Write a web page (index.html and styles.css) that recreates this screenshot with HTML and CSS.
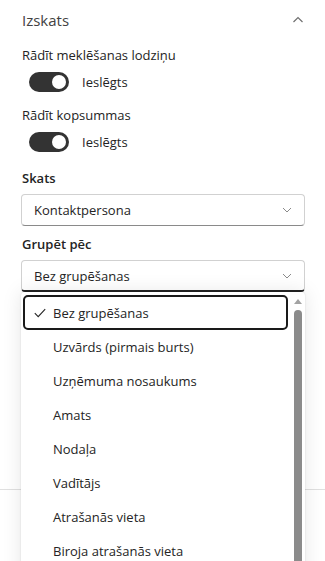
FILE: index.html
```html
<!DOCTYPE html>
<html lang="lv">
<head>
<meta charset="utf-8">
<title>Izskats</title>
<link rel="stylesheet" href="styles.css">
</head>
<body>
<div class="panel">
  <div class="section-head">
    <span class="section-title">Izskats</span>
    <svg class="chev-up" width="12" height="8" viewBox="0 0 12 8"><polyline points="1.5,6 6,1.5 10.5,6" fill="none" stroke="#707070" stroke-width="1.2"/></svg>
  </div>
  <div class="setting">
    <div class="label">Rādīt meklēšanas lodziņu</div>
    <div class="switch-row"><span class="switch"><span class="knob"></span></span><span class="switch-text">Ieslēgts</span></div>
  </div>
  <div class="setting second">
    <div class="label">Rādīt kopsummas</div>
    <div class="switch-row"><span class="switch"><span class="knob"></span></span><span class="switch-text">Ieslēgts</span></div>
  </div>
  <div class="field first-field">
    <div class="field-label">Skats</div>
    <div class="dropdown">
      <span>Kontaktpersona</span>
      <svg class="chev-down" width="10" height="6" viewBox="0 0 10 6"><polyline points="1,1 5,5 9,1" fill="none" stroke="#8a8a8a" stroke-width="1"/></svg>
    </div>
  </div>
  <div class="field second-field">
    <div class="field-label">Grupēt pēc</div>
    <div class="dropdown open">
      <span>Bez grupēšanas</span>
      <svg class="chev-down" width="10" height="6" viewBox="0 0 10 6"><polyline points="1,1 5,5 9,1" fill="none" stroke="#8a8a8a" stroke-width="1"/></svg>
    </div>
  </div>
  <div class="divider"></div>
</div>

<div class="listbox">
  <div class="options">
    <div class="option selected">
      <svg class="check" width="12" height="10" viewBox="0 0 12 10"><polyline points="0.8,5.2 4.2,8.6 11.2,1.2" fill="none" stroke="#242424" stroke-width="1.1"/></svg>
      <span>Bez grupēšanas</span>
    </div>
    <div class="option"><span class="nocheck"></span><span>Uzvārds (pirmais burts)</span></div>
    <div class="option"><span class="nocheck"></span><span>Uzņēmuma nosaukums</span></div>
    <div class="option"><span class="nocheck"></span><span>Amats</span></div>
    <div class="option"><span class="nocheck"></span><span>Nodaļa</span></div>
    <div class="option"><span class="nocheck"></span><span>Vadītājs</span></div>
    <div class="option"><span class="nocheck"></span><span>Atrašanās vieta</span></div>
    <div class="option"><span class="nocheck"></span><span>Biroja atrašanās vieta</span></div>
  </div>
  <div class="scrollbar">
    <div class="arrow"></div>
    <div class="thumb"></div>
  </div>
</div>
</body>
</html>
```

FILE: styles.css
```css
* { box-sizing: border-box; }
html, body { margin: 0; padding: 0; background: #ffffff; }
body {
  font-family: "Open Sans", "Noto Sans", sans-serif;
  font-size: 13px;
  color: #242424;
  width: 325px;
  height: 561px;
  overflow: hidden;
  position: relative;
}
.panel { padding: 0 20px 0 22px; }
.section-head {
  height: 40px;
  display: flex;
  align-items: center;
  justify-content: space-between;
}
.section-title { font-size: 15px; color: #424242; }
.chev-up { margin-right: 1px; }
.setting { margin-top: 5px; }
.setting.second { margin-top: 13px; }
.label { line-height: 20px; height: 20px; }
.switch-row {
  margin-top: 7px;
  height: 20px;
  display: flex;
  align-items: center;
}
.switch {
  width: 40px;
  height: 20px;
  border-radius: 10px;
  background: #333333;
  margin-left: 7px;
  display: flex;
  align-items: center;
  justify-content: flex-end;
  padding-right: 3px;
}
.knob { width: 14px; height: 14px; border-radius: 50%; background: #ffffff; }
.switch-text { margin-left: 13px; }
.field-label { font-weight: 600; line-height: 20px; height: 20px; }
.first-field { margin-top: 16px; }
.second-field { margin-top: 8px; }
.dropdown {
  margin-top: 6px;
  margin-left: -1px;
  height: 32px;
  border: 1px solid #d1d1d1;
  border-bottom-color: #8a8a8a;
  border-radius: 4px;
  display: flex;
  align-items: center;
  justify-content: space-between;
  padding: 0 12px 0 12px;
}
.dropdown.open { border-bottom: 2px solid #242424; }
.divider {
  margin: 197px -20px 0 -22px;
  height: 1px;
  background: #e0e0e0;
}
.listbox {
  position: absolute;
  top: 292px;
  left: 21px;
  width: 284px;
  height: 290px;
  background: #ffffff;
  border-radius: 4px;
  box-shadow: 0 0 20px rgba(0, 0, 0, 0.10), 0 0 2px rgba(0, 0, 0, 0.12);
  display: flex;
}
.options { padding: 3px 0 0 2px; width: 270px; }
.option {
  height: 34px;
  width: 265px;
  border: 2px solid transparent;
  border-radius: 5px;
  display: flex;
  align-items: center;
  padding-left: 9px;
}
.option.selected { border-color: #1a1a1a; height: 35px; }
.check, .nocheck { width: 12px; flex: none; margin-right: 7px; }
.scrollbar {
  width: 14px;
  display: flex;
  flex-direction: column;
  align-items: center;
  padding-top: 7px;
}
.arrow {
  width: 0; height: 0;
  border-left: 4px solid transparent;
  border-right: 4px solid transparent;
  border-bottom: 5px solid #a3a3a3;
}
.thumb {
  margin-top: 6px;
  width: 8px;
  flex: 1;
  background: #8b8b8b;
  border-radius: 4px 4px 0 0;
}
```
